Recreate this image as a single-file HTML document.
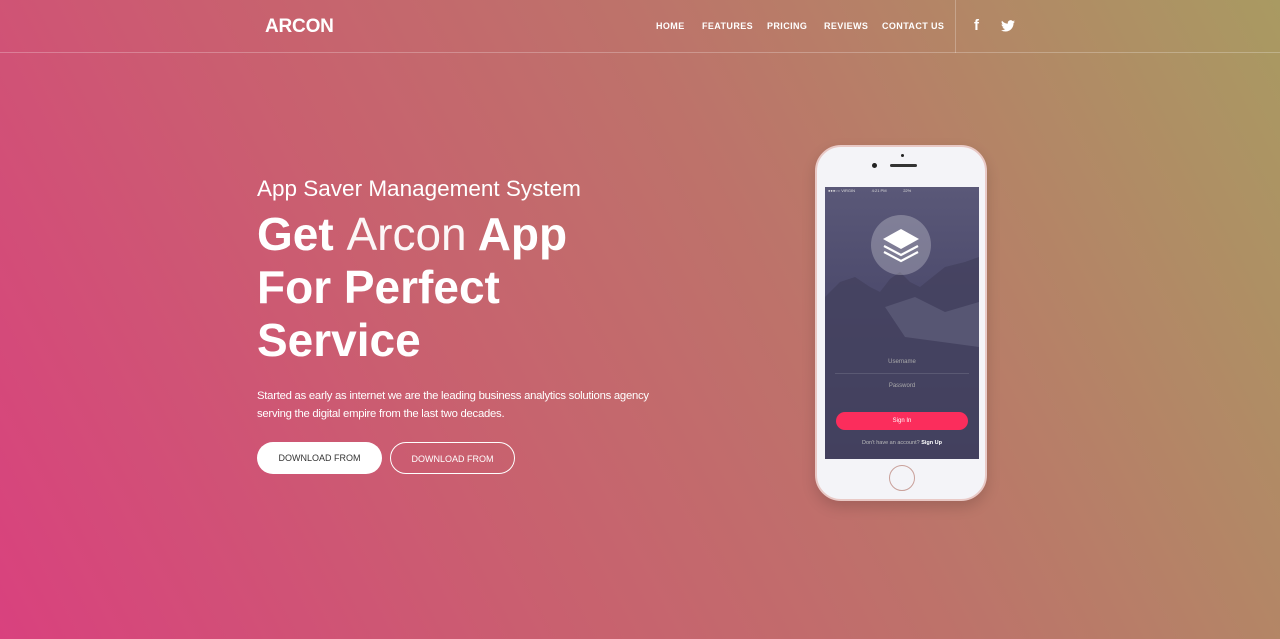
<!DOCTYPE html>
<html><head><meta charset="utf-8"><style>
*{margin:0;padding:0;box-sizing:border-box}
body{width:1280px;height:639px;overflow:hidden;font-family:"Liberation Sans",sans-serif;color:#fff;
background:linear-gradient(62deg,#d9417e 0%,#c9606f 35%,#bd736a 60%,#a99a62 100%);position:relative}
.nav{position:absolute;left:0;top:0;width:1280px;height:53px;border-bottom:1px solid rgba(255,255,255,.25)}
.logo{position:absolute;left:265px;top:16px;font-size:19px;font-weight:bold;letter-spacing:-.2px}
.menu{position:absolute;top:21px;font-size:9px;font-weight:bold;letter-spacing:.4px}
.vl{position:absolute;left:955px;top:0;width:1px;height:53px;background:rgba(255,255,255,.25)}
h3{position:absolute;left:257px;top:176px;font-size:22.5px;font-weight:normal}
h1{position:absolute;left:257px;top:208px;font-size:46px;line-height:53px;font-weight:bold}
h1 span{font-weight:normal;opacity:.95}
p{position:absolute;left:257px;top:387px;font-size:11.3px;line-height:18px;letter-spacing:-.25px}
.btn{position:absolute;top:442px;width:125px;height:32px;border-radius:16px;font-size:9px;text-align:center;line-height:32px}
.phone{position:absolute;left:815px;top:145px;width:172px;height:356px;background:#f4f4f8;border-radius:26px;border:2px solid #e9c9c6;box-shadow:0 6px 14px rgba(0,0,0,.15)}
.scr{position:absolute;left:8px;top:40px;width:154px;height:272px;background:linear-gradient(180deg,#5a5878 0%,#4d4b6d 40%,#3c3a5a 100%);overflow:hidden}
</style></head><body>
<div class="nav">
<div class="logo">ARCON</div>
<div class="menu" style="left:656px">HOME</div>
<div class="menu" style="left:702px">FEATURES</div>
<div class="menu" style="left:767px">PRICING</div>
<div class="menu" style="left:824px">REVIEWS</div>
<div class="menu" style="left:882px">CONTACT US</div>
<div class="vl"></div>
<div class="menu" style="left:974px;top:17px;font-size:15px;font-family:'Liberation Sans',sans-serif">f</div>
<svg style="position:absolute;left:1001px;top:20px" width="14" height="12" viewBox="0 0 24 20"><path fill="#fff" d="M24 2.4a10 10 0 0 1-2.8.8A5 5 0 0 0 23.3.4a10 10 0 0 1-3.1 1.2A4.9 4.9 0 0 0 11.8 6 14 14 0 0 1 1.7.9a4.9 4.9 0 0 0 1.5 6.6A4.900 4.9 0 0 1 1 6.9a4.9 4.9 0 0 0 3.9 4.8 5 5 0 0 1-2.2.1 4.9 4.9 0 0 0 4.6 3.4A9.900 9.9 0 0 1 0 17.3 14 14 0 0 0 7.5 19.5c9.100 0 14-7.500 14-14v-.6A10 10 0 0 0 24 2.400z"/></svg>
</div>
<h3>App Saver Management System</h3>
<h1>Get <span>Arcon</span> App<br>For Perfect<br>Service</h1>
<p>Started as early as internet we are the leading business analytics solutions agency<br>serving the digital empire from the last two decades.</p>
<div class="btn" style="left:257px;background:#fff;color:#333">DOWNLOAD FROM</div>
<div class="btn" style="left:390px;border:1px solid #fff;color:#fff">DOWNLOAD FROM</div>
<div class="phone">
<div style="position:absolute;left:84px;top:7px;width:3px;height:3px;border-radius:50%;background:#222"></div>
<div style="position:absolute;left:55px;top:16px;width:5px;height:5px;border-radius:50%;background:#222"></div>
<div style="position:absolute;left:73px;top:17px;width:27px;height:3px;border-radius:2px;background:#333"></div>
<div class="scr">
<svg width="154" height="272" style="position:absolute;left:0;top:0"><polygon points="0,110 15,95 30,90 45,100 55,105 65,92 75,85 85,95 95,100 110,88 120,80 140,75 154,70 154,272 0,272" fill="#44425f" opacity=".85"/><polygon points="60,120 90,110 120,125 154,115 154,160 80,150" fill="#6a6a86" opacity=".5"/></svg>
<div style="position:absolute;left:0;top:0;width:154px;height:8px;font-size:4px;color:#ddd;padding:1px 3px">●●●○○ VIRGIN &nbsp; &nbsp; &nbsp; &nbsp; &nbsp; &nbsp; &nbsp; 4:21 PM &nbsp; &nbsp; &nbsp; &nbsp; &nbsp; &nbsp; &nbsp; 22%</div>
<div style="position:absolute;left:46px;top:28px;width:60px;height:60px;border-radius:50%;background:rgba(255,255,255,.25)"></div>
<svg style="position:absolute;left:56px;top:40px" width="40" height="38" viewBox="0 0 40 38"><path d="M20 2 38 12 20 22 2 12z" fill="#fff"/><path d="M3 19 20 28 37 19M3 25 20 34 37 25" stroke="#fff" stroke-width="2.2" fill="none"/></svg>
<div style="position:absolute;left:0;top:172px;width:154px;text-align:center;font-size:6px;color:#aaa">Username</div>
<div style="position:absolute;left:10px;top:186px;width:134px;height:1px;background:rgba(255,255,255,.12)"></div>
<div style="position:absolute;left:0;top:196px;width:154px;text-align:center;font-size:6px;color:#aaa">Password</div>
<div style="position:absolute;left:11px;top:225px;width:132px;height:18px;border-radius:9px;background:#fb2d5c;font-size:6px;text-align:center;line-height:18px">Sign In</div>
<div style="position:absolute;left:0;top:253px;width:154px;text-align:center;font-size:5.5px;color:#bbb">Don't have an account? <b style="color:#fff">Sign Up</b></div>
</div>
<div style="position:absolute;left:72px;top:318px;width:26px;height:26px;border-radius:50%;border:1.5px solid #c9a09a"></div>
</div>
</body></html>
